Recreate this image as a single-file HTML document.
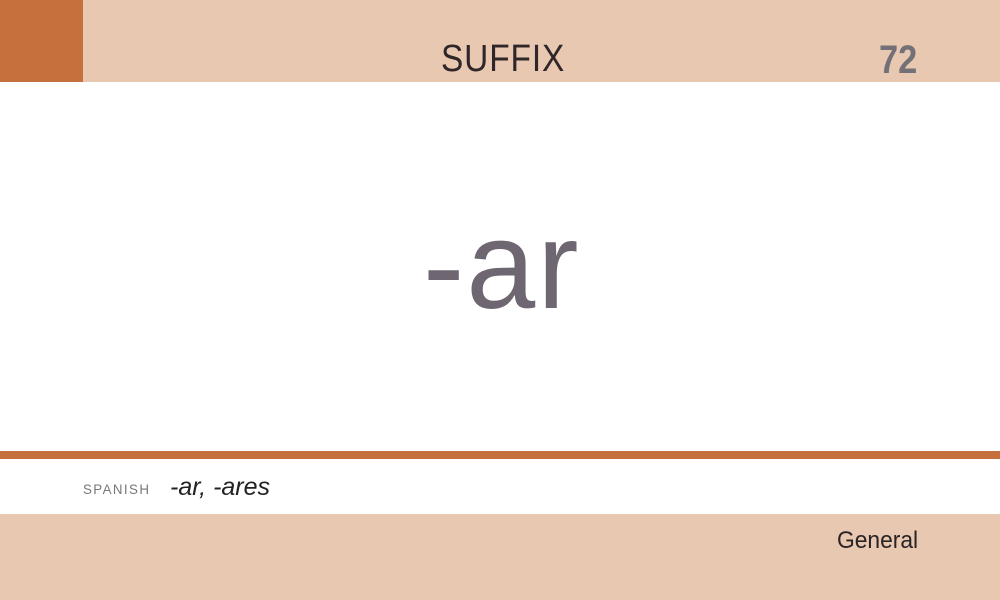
<!DOCTYPE html>
<html><head><style>
body{margin:0;width:1000px;height:600px;position:relative;background:#fff;font-family:"Liberation Sans",sans-serif;overflow:hidden}
.top{position:absolute;left:0;top:0;width:1000px;height:82px;background:#e8c8b0}
.blk{position:absolute;left:0;top:0;width:83px;height:82px;background:#c6703e}
.line{position:absolute;left:0;top:451px;width:1000px;height:8px;background:#c6703e}
.bot{position:absolute;left:0;top:514px;width:1000px;height:86px;background:#e8c8b0}
.t{position:absolute;white-space:nowrap}
</style></head><body>
<div class="top"></div><div class="blk"></div>
<div class="t" style="left:441px;top:38px;font-size:38px;color:#2e2628;transform:scaleX(.88);transform-origin:left top;letter-spacing:1px">SUFFIX</div>
<div class="t" style="left:879px;top:38px;font-size:40px;font-weight:bold;color:#737077;transform:scaleX(.86);transform-origin:left top">72</div>
<div class="t" style="left:423px;top:195px;font-size:124px;color:#6e6670;letter-spacing:2px">-ar</div>
<div class="line"></div>
<div class="t" style="left:83px;top:481px;font-size:14px;color:#777;letter-spacing:1.5px;transform:scaleX(.95);transform-origin:left top">SPANISH</div>
<div class="t" style="left:170px;top:473px;font-size:25px;font-style:italic;color:#222">-ar, -ares</div>
<div class="bot"></div>
<div class="t" style="left:837px;top:527px;font-size:24px;color:#2a2325;transform:scaleX(.95);transform-origin:left top">General</div>
</body></html>
